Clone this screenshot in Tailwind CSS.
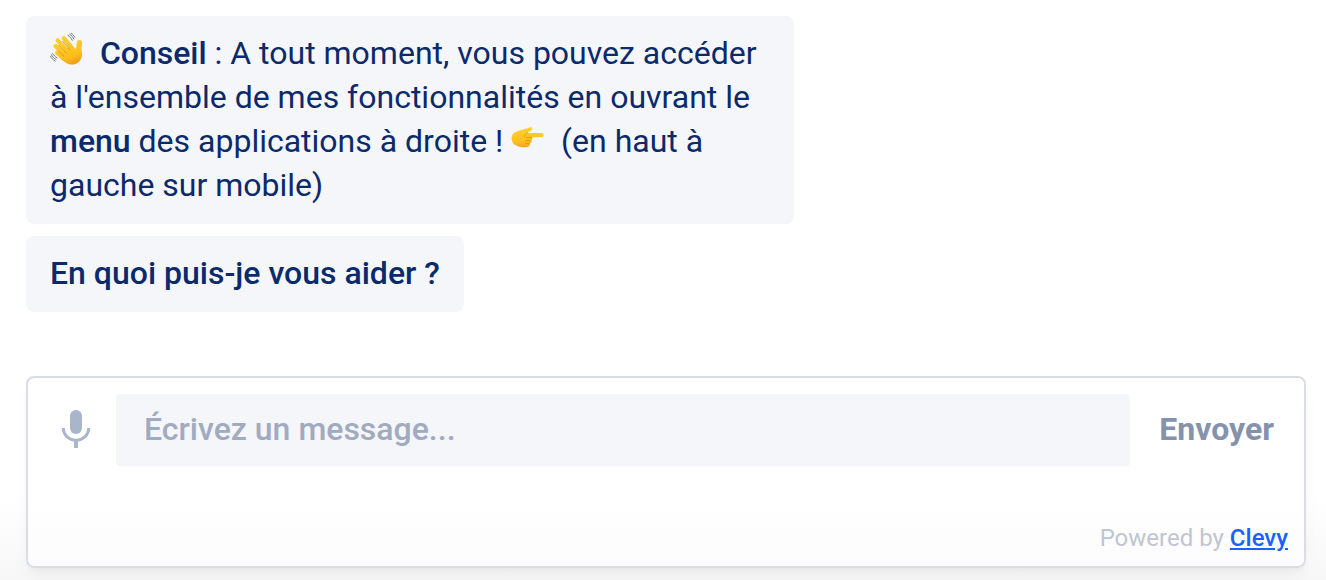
<!DOCTYPE html>
<html lang="fr">
<head>
    <meta charset="UTF-8">
    <meta name="viewport" content="width=device-width, initial-scale=1.0">
    <title>Clevy - Assistant</title>
    <script src="https://cdn.jsdelivr.net/npm/@tailwindcss/browser@4"></script>
</head>
<body class="bg-white font-[Roboto,sans-serif]">
    <div class="flex min-h-screen flex-col justify-between bg-linear-to-b from-white from-85% to-[#f7f7f7] pt-4 pr-5 pb-3 pl-[26px]">

        <!-- Messages -->
        <main class="flex flex-col items-start gap-3 text-[32px] leading-[44px] text-[#0b2a6b]">
            <p class="max-w-3xl rounded-lg bg-[#f5f6fa] px-6 pt-[15px] pb-[17px]">
                <svg class="-mt-1.5 mb-1.5 inline-block size-[34px] align-middle" viewBox="0 0 34 34" role="img" aria-label="Main qui salue">
                    <defs>
                        <linearGradient id="hand" gradientUnits="userSpaceOnUse" x1="10" y1="4" x2="21" y2="33">
                            <stop offset="0" stop-color="#ffd034"/>
                            <stop offset="0.7" stop-color="#fdbf1e"/>
                            <stop offset="1" stop-color="#ee9a1a"/>
                        </linearGradient>
                    </defs>
                    <g fill="none" stroke="url(#hand)" stroke-width="4.400" stroke-linecap="round">
                        <path d="m13.700 5.200 9.300 11.300M7.700 7.400l11.300 13M5.700 13l10.300 10.500M7.300 19.600l6.700 6.400"/>
                    </g>
                    <path d="M20.500 11.500 24 15.400c1 1 2 .6 2.200-.8l.5-4.200c.3-2.200 1.200-3.600 3.100-3.400 1.900.2 2.500 1.600 2.200 3.500l-.5 4.300c-.1 1.800.6 3.500.6 6.200 0 6-4.300 10.600-10 10.600-4.500 0-7.500-2.400-10.400-5.400l-2-2.700z" fill="url(#hand)"/>
                    <path d="m12.700 8.500 7 8.100M8.900 12.300l7.400 7.900M8.600 18.100l5.400 5.300" fill="none" stroke="#dd9216" stroke-width="0.900" stroke-linecap="round"/>
                    <path d="M18 2.300c2 1.200 3.200 2.800 4.200 5M19.600 1.100c2 1.200 3.200 2.800 4.200 5M21.200 0.300c1.600 1 2.700 2.300 3.600 4M.5 23.400c1 1.900 2.400 3.400 4.600 4.700M1.400 21.800c1 1.900 2.400 3.400 4.600 4.700M2.700 20.600c1 1.700 2.300 3.100 4.300 4.300" fill="none" stroke="#6b6c72" stroke-width="0.900" stroke-linecap="round"/>
                </svg>&nbsp;
                <strong class="font-medium">Conseil</strong> : A tout moment, vous pouvez accéder à l'ensemble de mes fonctionnalités en ouvrant le <strong class="font-medium">menu</strong> des applications à droite !
                <svg class="-mt-1.5 mb-1.5 inline-block size-[34px] align-middle" viewBox="0 0 34 34" role="img" aria-label="Doigt pointé vers la droite">
                    <defs>
                        <linearGradient id="finger" gradientUnits="userSpaceOnUse" x1="14" y1="6" x2="14" y2="27">
                            <stop offset="0" stop-color="#ffd034"/>
                            <stop offset="0.7" stop-color="#fdbf1e"/>
                            <stop offset="1" stop-color="#f0a01c"/>
                        </linearGradient>
                    </defs>
                    <path d="M.6 17c0-3.200 2-5.500 5.200-6.500 4-1.200 8.500-2.600 13.200-4.200 2.200-.6 3.200 1.900 1.400 2.900l-4 2.800h14.300c2.500 0 2.600 4.100 0 4.100l-9.800.2c1 1.300.7 2.500-.5 3.100.6 1.400 0 2.400-1.400 2.900 0 1.900-.7 3.400-2.500 3.700-4.400.6-8 .2-10.500-1.200C2.800 23.600.6 21.200.6 17z" fill="url(#finger)"/>
                    <path d="M16.400 12c-2 .8-3 2-3 3.500M20.500 16.300h-5M19.800 19.400h-5M18.400 22.300h-4" fill="none" stroke="#e09415" stroke-width="0.900" stroke-linecap="round"/>
                </svg>&nbsp;
                (en haut à gauche sur mobile)
            </p>
            <p class="rounded-lg bg-[#f5f6fa] px-6 pt-[15px] pb-[17px] font-medium">En quoi puis-je vous aider ?</p>
        </main>

        <!-- Message box -->
        <form class="mt-16 rounded-lg border-2 border-[#d9dde6] bg-white/50 px-4 pt-4 pb-3 shadow-lg shadow-black/5">
            <div class="flex items-center">
                <button type="button" aria-label="Dicter un message" class="flex size-16 items-center justify-center text-[#a9b5cb]">
                    <svg class="h-10 w-8" viewBox="0 0 32 40" fill="none" stroke="currentColor" aria-hidden="true">
                        <rect x="10" y="0" width="12" height="24" rx="6" fill="currentColor" stroke="none"/>
                        <path d="M3.300 18a12.700 12.300 0 0 0 25.400 0" stroke-width="3"/>
                        <path d="M16 30v8" stroke-width="4"/>
                    </svg>
                </button>
                <input type="text" aria-label="Message" placeholder="Écrivez un message..." class="ml-2 h-[72px] min-w-0 flex-1 rounded bg-[#f5f6fa] px-7 pb-0.5 text-[32px] font-medium text-[#0b2a6b] outline-none placeholder:text-[#a0abc0]">
                <button type="submit" class="pr-3.5 pb-0.5 pl-[29px] text-[32px] font-bold text-[#8592ab]">Envoyer</button>
            </div>
            <p class="mt-14 text-right text-2xl leading-8 text-[#c0c5d2]">Powered by <a href="#" class="font-medium text-[#1a62ff] underline">Clevy</a></p>
        </form>
    </div>
</body>
</html>
